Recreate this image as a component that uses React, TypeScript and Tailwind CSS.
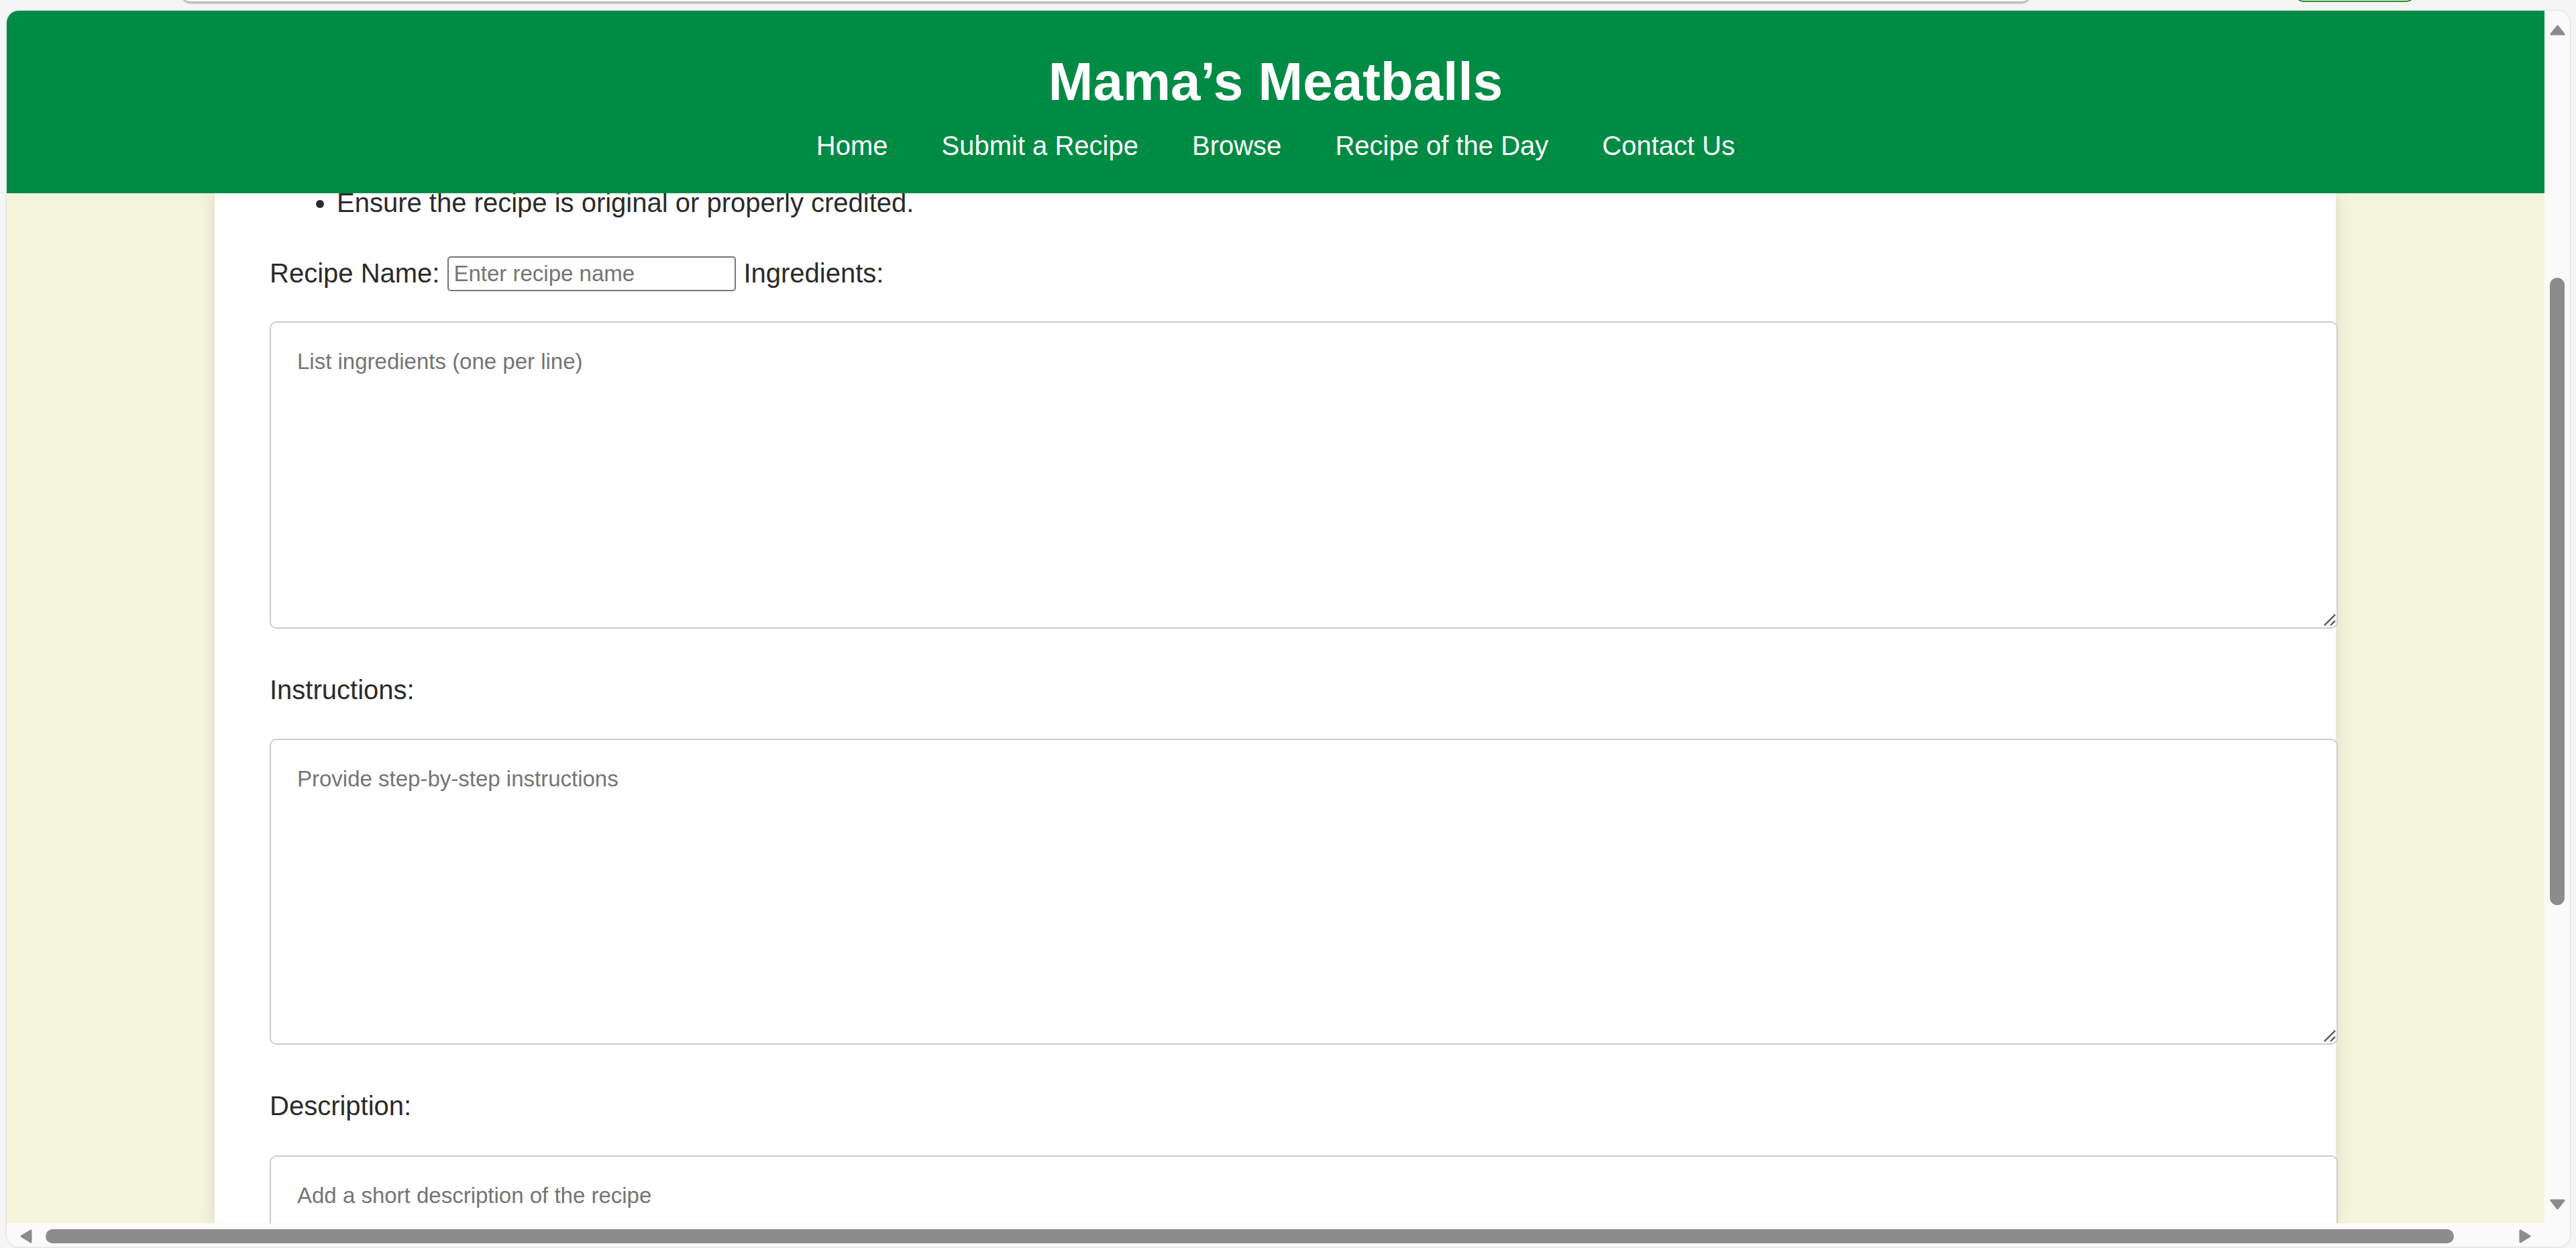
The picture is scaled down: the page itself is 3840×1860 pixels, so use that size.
import React from "react";

const navItems = ["Home", "Submit a Recipe", "Browse", "Recipe of the Day", "Contact Us"];

function ResizeGrip() {
  return (
    <svg className="pointer-events-none absolute bottom-[4px] right-[3px]" width="18" height="18" viewBox="0 0 18 18">
      <path d="M1 17 L17 1 M10 17 L17 10" stroke="#666" strokeWidth="2.5" fill="none" />
    </svg>
  );
}

function TextBox({ placeholder, height, grip = true }: { placeholder: string; height: string; grip?: boolean }) {
  return (
    <div className="relative w-[3083px]">
      <textarea
        placeholder={placeholder}
        className={`block w-full resize-none rounded-[10px] border-2 border-[#cccccc] bg-white pl-[39px] pr-[37px] pt-[39px] text-[33px] leading-[38px] text-[#333] outline-none placeholder:text-[#757575] ${height}`}
      />
      {grip && <ResizeGrip />}
    </div>
  );
}

function Arrow({ dir }: { dir: "up" | "down" | "left" | "right" }) {
  const pts = {
    up: "11.5,2 21,14 2,14",
    down: "2,2 21,2 11.5,14",
    left: "17,2 17,19 3,10.5",
    right: "2,2 2,19 16,10.5",
  }[dir];
  const size = dir === "up" || dir === "down" ? { w: 23, h: 16 } : { w: 19, h: 21 };
  return (
    <svg width={size.w} height={size.h} viewBox={`0 0 ${size.w} ${size.h}`}>
      <polygon points={pts} fill="#8c8c8c" stroke="#8c8c8c" strokeWidth="3" strokeLinejoin="round" />
    </svg>
  );
}

export default function App() {
  return (
    <div className="h-[1860px] w-[3840px] overflow-hidden bg-[#f5f5f5] font-['Liberation_Sans',Arial,sans-serif]">
      {/* browser chrome strip */}
      <div className="flex h-[16px] items-start overflow-hidden">
        <div className="ml-[270px] mt-[-35px] h-[40px] w-[2757px] rounded-b-[14px] border-b-[3px] border-[#bdbdbd] bg-white shadow-[0_1px_2px_rgba(0,0,0,0.15)]" />
        <div className="ml-[393px] mt-[-37px] h-[40px] w-[181px] rounded-[14px] border-2 border-[#2e8b2e]" />
      </div>

      {/* window */}
      <div className="ml-[10px] grid h-[1842px] w-[3821px] grid-cols-[3783px_38px] grid-rows-[1807px_35px] overflow-hidden rounded-[18px] bg-[#fafafa] shadow-[0_0_3px_rgba(0,0,0,0.2)]">
        {/* page viewport */}
        <div className="flex flex-col overflow-hidden bg-[#f5f5dc]">
          <header className="flex h-[272px] shrink-0 flex-col items-center bg-[#008b45] pt-[60px] text-white">
            <h1 className="text-[80px] font-bold leading-[92px]">Mama’s Meatballs</h1>
            <nav className="mt-[26px] flex text-[40px] leading-[46px]">
              {navItems.map((item) => (
                <a key={item} className="mx-[40px]">
                  {item}
                </a>
              ))}
            </nav>
          </header>

          <div className="flex-1 overflow-hidden">
            <main className="ml-[310px] flex h-full w-[3162px] flex-col bg-white pl-[82px] text-[40px] leading-[46px] text-[#2b2b2b] shadow-[0_0_25px_rgba(0,0,0,0.12)]">
              <ul className="mt-[-9px] list-disc pl-[100px]">
                <li>Ensure the recipe is original or properly credited.</li>
              </ul>

              <div className="mt-[56px] flex items-start">
                <label className="pt-[3px]">Recipe Name:</label>
                <input
                  placeholder="Enter recipe name"
                  className="ml-[12px] mt-[1px] h-[52px] w-[430px] rounded-[5px] border-2 border-[#767676] bg-white px-[7px] text-[33px] leading-[38px] outline-none placeholder:text-[#757575]"
                />
                <label className="ml-[11px] pt-[3px]">Ingredients:</label>
              </div>

              <div className="mt-[45px]">
                <TextBox placeholder="List ingredients (one per line)" height="h-[458px]" />
              </div>

              <label className="mt-[68px]">Instructions:</label>
              <div className="mt-[50px]">
                <TextBox placeholder="Provide step-by-step instructions" height="h-[456px]" />
              </div>

              <label className="mt-[68px]">Description:</label>
              <div className="mt-[51px]">
                <TextBox placeholder="Add a short description of the recipe" height="h-[458px]" grip={false} />
              </div>
            </main>
          </div>
        </div>

        {/* vertical scrollbar */}
        <div className="flex flex-col bg-[#fafafa] pl-[8px]">
          <div className="mt-[21px]">
            <Arrow dir="up" />
          </div>
          <div className="mt-[361px] h-[935px] w-[22px] rounded-full bg-[#8c8c8c]" />
          <div className="mt-[438px]">
            <Arrow dir="down" />
          </div>
        </div>

        {/* horizontal scrollbar */}
        <div className="col-span-2 flex items-start bg-[#fafafa] pt-[9px]">
          <div className="ml-[19px]">
            <Arrow dir="left" />
          </div>
          <div className="ml-[20px] h-[21px] w-[3590px] rounded-full bg-[#8c8c8c]" />
          <div className="ml-[97px]">
            <Arrow dir="right" />
          </div>
        </div>
      </div>
    </div>
  );
}
